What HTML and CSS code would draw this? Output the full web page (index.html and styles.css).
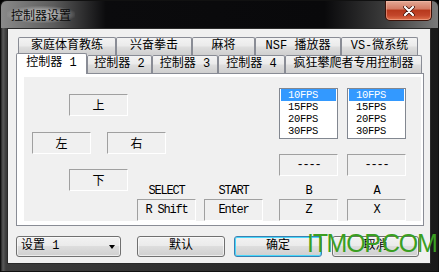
FILE: index.html
```html
<!DOCTYPE html>
<html lang="zh">
<head>
  <meta charset="UTF-8">
  <title>控制器设置</title>
  <link rel="stylesheet" href="styles.css">
</head>
<body>
  <div class="window">
    <div class="titlebar">
      <span class="title">控制器设置</span>
      <div class="close">
        <svg width="12" height="10" viewBox="0 0 12 10">
          <path d="M2 1 L10 9 M10 1 L2 9" stroke="#3a0d05" stroke-width="3.6" stroke-linecap="round"/>
          <path d="M2 1 L10 9 M10 1 L2 9" stroke="#fff" stroke-width="2.2" stroke-linecap="round"/>
        </svg>
      </div>
    </div>

    <div class="client">
      <div class="tabs">
        <div class="tab-row">
          <div class="tab t-coach">家庭体育教练</div>
          <div class="tab t-boxing">兴奋拳击</div>
          <div class="tab t-mahjong">麻将</div>
          <div class="tab t-nsf">NSF 播放器</div>
          <div class="tab t-vs">VS-微系统</div>
        </div>
        <div class="tab-row front">
          <div class="tab active t-c1">控制器 1</div>
          <div class="tab t-c2">控制器 2</div>
          <div class="tab t-c3">控制器 3</div>
          <div class="tab t-c4">控制器 4</div>
          <div class="tab t-climb">疯狂攀爬者专用控制器</div>
        </div>

        <div class="panel">
          <div class="page">
            <div class="left-group">
              <div class="row-up">
                <div class="key">上</div>
              </div>
              <div class="row-lr">
                <div class="key">左</div>
                <div class="key">右</div>
              </div>
              <div class="row-down">
                <div class="key">下</div>
                <div class="btn-col select-col">
                  <div class="label">SELECT</div>
                  <div class="key latin">R Shift</div>
                </div>
                <div class="btn-col start-col">
                  <div class="label">START</div>
                  <div class="key latin">Enter</div>
                </div>
              </div>
            </div>

            <div class="right-group">
              <div class="turbo-col">
                <div class="list">
                  <div class="item selected">10FPS</div>
                  <div class="item">15FPS</div>
                  <div class="item">20FPS</div>
                  <div class="item">30FPS</div>
                </div>
                <div class="key latin turbo">----</div>
                <div class="label">B</div>
                <div class="key latin">Z</div>
              </div>
              <div class="turbo-col">
                <div class="list">
                  <div class="item selected">10FPS</div>
                  <div class="item">15FPS</div>
                  <div class="item">20FPS</div>
                  <div class="item">30FPS</div>
                </div>
                <div class="key latin turbo">----</div>
                <div class="label">A</div>
                <div class="key latin">X</div>
              </div>
            </div>
          </div>
        </div>
      </div>

      <div class="footer">
        <div class="combo">
          <span>设置 1</span>
          <span class="arrow"></span>
        </div>
        <div class="button b-default">默认</div>
        <div class="button b-ok focused">确定</div>
        <div class="button b-cancel">取消</div>
      </div>
    </div>

    <div class="watermark">ITMOP.COM</div>
  </div>
</body>
</html>
```

FILE: styles.css
```css
body {
  margin: 0;
  width: 439px;
  height: 272px;
  overflow: hidden;
  background: #000;
  font-family: "Liberation Mono", "Noto Sans CJK SC", monospace;
  font-size: 12px;
  color: #000;
}

.window {
  position: relative;
  width: 439px;
  height: 272px;
  box-sizing: border-box;
  display: flex;
  flex-direction: column;
  border: 1px solid #111;
  border-radius: 6px 6px 0 0;
  background: linear-gradient(to right, #262626 0, #5a5a5a 2px, #3c3c3c 5px, #1a1a1a 100%);
}

.titlebar {
  height: 27px;
  display: flex;
  align-items: flex-start;
  background: linear-gradient(to right, #8a8a8a 0%, #5c5c5c 12%, #0b0b0d 24%, #09090b 74%, #3c3c3c 88%, #7a7a7a 100%);
  border-radius: 6px 6px 0 0;
}

.title {
  margin: 5px 0 0 6px;
  font-family: "Noto Sans CJK SC", sans-serif;
  font-size: 12px;
  line-height: 17px;
  color: #0a0a0a;
  padding: 0 4px;
  background: radial-gradient(ellipse at center, rgba(200,200,200,0.75) 30%, rgba(200,200,200,0) 75%);
}

.close {
  margin-left: auto;
  margin-right: 6px;
  width: 47px;
  height: 20px;
  box-sizing: border-box;
  border: 1px solid #3b1209;
  border-top: none;
  border-radius: 0 0 5px 5px;
  background: linear-gradient(#e3a895 0%, #d47d66 40%, #b8391d 50%, #c2452a 75%, #e0714c 100%);
  box-shadow: inset 0 0 0 1px rgba(255,200,180,0.45);
  display: flex;
  align-items: center;
  justify-content: center;
}

.client {
  flex: 1;
  margin: 0 7px 7px 6px;
  background: #f0f0f0;
  border: 1px solid #2a2a2a;
}

/* tab control */
.tabs {
  margin: 8px 0 0 8px;
}

.tab-row {
  display: flex;
  height: 18px;
  margin-left: 2px;
}

.tab-row.front {
  margin-left: 0;
  align-items: flex-end;
}

.tab {
  box-sizing: border-box;
  height: 18px;
  border: 1px solid #898c95;
  border-bottom: none;
  border-radius: 2px 2px 0 0;
  background: linear-gradient(#f3f3f3 0%, #ebebeb 45%, #dddddd 55%, #cfcfcf 100%);
  text-align: center;
  line-height: 17px;
  white-space: nowrap;
}

.tab.active {
  height: 21px;
  margin-bottom: -1px;
  background: #fff;
  position: relative;
  z-index: 1;
  line-height: 19px;
}

.t-coach { width: 98px; }
.t-boxing { width: 76px; }
.t-mahjong { width: 63px; }
.t-nsf { width: 86px; }
.t-vs { width: 77px; }
.t-c1 { width: 71px; }
.t-c2 { width: 65px; }
.t-c3 { width: 66px; }
.t-c4 { width: 67px; }
.t-climb { width: 137px; }

.panel {
  width: 408px;
  height: 153px;
  box-sizing: border-box;
  border: 1px solid #898c95;
  background: #fff;
  padding: 3px 2px 4px 7px;
}

.page {
  height: 100%;
  background: #f0f0f0;
  display: flex;
  overflow: hidden;
}

.key {
  width: 59px;
  height: 22px;
  box-sizing: border-box;
  border: 1px solid;
  border-color: #a0a0a0 #fff #fff #a0a0a0;
  text-align: center;
  line-height: 20px;
  font-family: "Noto Sans CJK SC", sans-serif;
}

.key.latin,
.label {
  font-family: "Liberation Mono", monospace;
  letter-spacing: -1.2px;
}

.label {
  width: 59px;
  height: 15px;
  line-height: 15px;
  text-align: center;
}

.left-group {
  flex: 0 0 255px;
}

.row-up {
  margin: 17px 0 0 45px;
}

.row-lr {
  display: flex;
  gap: 16px;
  margin: 16px 0 0 8px;
}

.row-down {
  display: flex;
  align-items: flex-start;
  margin: 15px 0 0 45px;
}

.btn-col {
  margin-top: 15px;
}

.select-col { margin-left: 9px; }
.start-col { margin-left: 8px; }

.right-group {
  display: flex;
  gap: 9px;
  margin-top: 11px;
}

.list {
  width: 59px;
  height: 51px;
  box-sizing: border-box;
  border: 1px solid #828790;
  background: #fff;
  padding: 0 1px;
}

.item {
  height: 12px;
  line-height: 12px;
  padding-left: 7px;
  font-family: "Liberation Mono", monospace;
  font-size: 10.5px;
  letter-spacing: -0.3px;
}

.item.selected {
  background: #3399ff;
  color: #fff;
}

.turbo {
  margin-top: 15px;
}

.turbo + .label {
  margin-top: 8px;
}

/* bottom buttons */
.footer {
  display: flex;
  align-items: center;
  margin: 10px 0 0 8px;
}

.combo,
.button {
  height: 21px;
  box-sizing: border-box;
  border: 1px solid #707070;
  border-radius: 3px;
  background: linear-gradient(#f2f2f2 0%, #ebebeb 45%, #dddddd 50%, #cfcfcf 100%);
  box-shadow: inset 0 0 0 1px rgba(255,255,255,0.6);
  font-family: "Liberation Mono", "Noto Sans CJK SC", monospace;
  line-height: 19px;
}

.combo {
  width: 105px;
  display: flex;
  justify-content: space-between;
  align-items: center;
  padding: 0 5px 0 4px;
}

.arrow {
  width: 0;
  height: 0;
  border-left: 3.5px solid transparent;
  border-right: 3.5px solid transparent;
  border-top: 4px solid #000;
}

.button {
  text-align: center;
}

.b-default { width: 88px; margin-left: 16px; }
.b-ok { width: 88px; margin-left: 9px; }
.b-cancel { width: 87px; margin-left: 10px; }

.button.focused {
  border-color: #3c7fb1;
  box-shadow: inset 0 0 0 1px #48d8fb;
}

.watermark {
  position: absolute;
  left: 306px;
  top: 228px;
  font-family: "Liberation Sans", sans-serif;
  font-size: 25px;
  letter-spacing: -1.3px;
  color: #3a9f22;
  line-height: 28px;
}
```
